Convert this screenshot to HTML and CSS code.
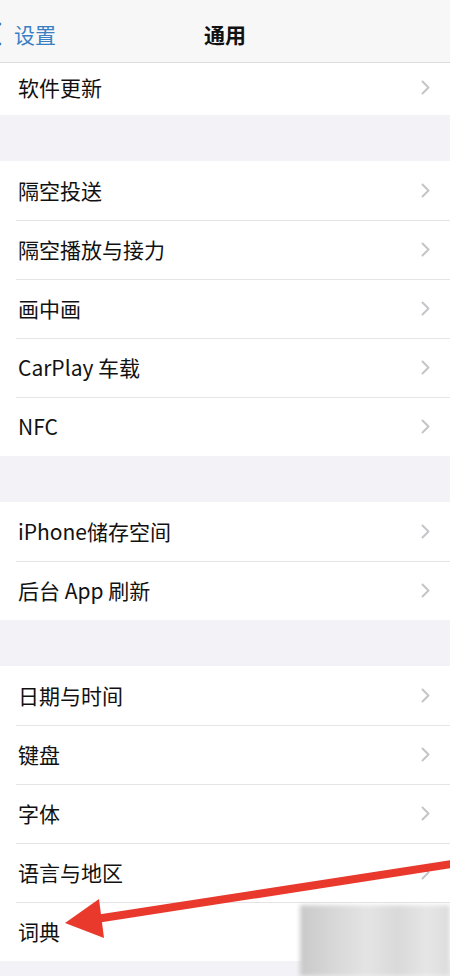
FILE: index.html
```html
<!DOCTYPE html>
<html lang="zh">
<head>
<meta charset="utf-8">
<title>通用</title>
<link rel="stylesheet" href="styles.css">
</head>
<body>
<div class="screen">
  <header class="nav">
    <div class="back">
      <svg class="back-icon" width="12" height="24" viewBox="0 0 12 24"><polyline points="9,2 -1,12 9,22" fill="none" stroke="#3a7fc4" stroke-width="2.6" stroke-linecap="round" stroke-linejoin="round"/></svg>
      <span class="back-text">设置</span>
    </div>
    <div class="title">通用</div>
  </header>

  <section class="group first">
    <div class="row"><span class="label">软件更新</span><svg class="chev" width="9" height="15" viewBox="0 0 9 15"><polyline points="1.5,1.5 7.5,7.5 1.5,13.5" fill="none" stroke="#c5c5c9" stroke-width="2" stroke-linecap="round" stroke-linejoin="round"/></svg></div>
  </section>

  <section class="group">
    <div class="row"><span class="label">隔空投送</span><svg class="chev" width="9" height="15" viewBox="0 0 9 15"><polyline points="1.5,1.5 7.5,7.5 1.5,13.5" fill="none" stroke="#c5c5c9" stroke-width="2" stroke-linecap="round" stroke-linejoin="round"/></svg></div>
    <div class="row"><span class="label">隔空播放与接力</span><svg class="chev" width="9" height="15" viewBox="0 0 9 15"><polyline points="1.5,1.5 7.5,7.5 1.5,13.5" fill="none" stroke="#c5c5c9" stroke-width="2" stroke-linecap="round" stroke-linejoin="round"/></svg></div>
    <div class="row"><span class="label">画中画</span><svg class="chev" width="9" height="15" viewBox="0 0 9 15"><polyline points="1.5,1.5 7.5,7.5 1.5,13.5" fill="none" stroke="#c5c5c9" stroke-width="2" stroke-linecap="round" stroke-linejoin="round"/></svg></div>
    <div class="row"><span class="label">CarPlay 车载</span><svg class="chev" width="9" height="15" viewBox="0 0 9 15"><polyline points="1.5,1.5 7.5,7.5 1.5,13.5" fill="none" stroke="#c5c5c9" stroke-width="2" stroke-linecap="round" stroke-linejoin="round"/></svg></div>
    <div class="row"><span class="label">NFC</span><svg class="chev" width="9" height="15" viewBox="0 0 9 15"><polyline points="1.5,1.5 7.5,7.5 1.5,13.5" fill="none" stroke="#c5c5c9" stroke-width="2" stroke-linecap="round" stroke-linejoin="round"/></svg></div>
  </section>

  <section class="group">
    <div class="row"><span class="label">iPhone储存空间</span><svg class="chev" width="9" height="15" viewBox="0 0 9 15"><polyline points="1.5,1.5 7.5,7.5 1.5,13.5" fill="none" stroke="#c5c5c9" stroke-width="2" stroke-linecap="round" stroke-linejoin="round"/></svg></div>
    <div class="row"><span class="label">后台 App 刷新</span><svg class="chev" width="9" height="15" viewBox="0 0 9 15"><polyline points="1.5,1.5 7.5,7.5 1.5,13.5" fill="none" stroke="#c5c5c9" stroke-width="2" stroke-linecap="round" stroke-linejoin="round"/></svg></div>
  </section>

  <section class="group">
    <div class="row"><span class="label">日期与时间</span><svg class="chev" width="9" height="15" viewBox="0 0 9 15"><polyline points="1.5,1.5 7.5,7.5 1.5,13.5" fill="none" stroke="#c5c5c9" stroke-width="2" stroke-linecap="round" stroke-linejoin="round"/></svg></div>
    <div class="row"><span class="label">键盘</span><svg class="chev" width="9" height="15" viewBox="0 0 9 15"><polyline points="1.5,1.5 7.5,7.5 1.5,13.5" fill="none" stroke="#c5c5c9" stroke-width="2" stroke-linecap="round" stroke-linejoin="round"/></svg></div>
    <div class="row"><span class="label">字体</span><svg class="chev" width="9" height="15" viewBox="0 0 9 15"><polyline points="1.5,1.5 7.5,7.5 1.5,13.5" fill="none" stroke="#c5c5c9" stroke-width="2" stroke-linecap="round" stroke-linejoin="round"/></svg></div>
    <div class="row"><span class="label">语言与地区</span><svg class="chev" width="9" height="15" viewBox="0 0 9 15"><polyline points="1.5,1.5 7.5,7.5 1.5,13.5" fill="none" stroke="#c5c5c9" stroke-width="2" stroke-linecap="round" stroke-linejoin="round"/></svg></div>
    <div class="row"><span class="label">词典</span></div>
  </section>

  <div class="watermark"></div>
  <svg class="arrow" width="450" height="976" viewBox="0 0 450 976">
    <line x1="452" y1="864" x2="96" y2="919" stroke="#e8392c" stroke-width="8" stroke-linecap="round"/>
    <polygon points="65,923 99,899 104,938" fill="#e8392c"/>
  </svg>
</div>
</body>
</html>
```

FILE: styles.css
```css
* { box-sizing: border-box; }
html, body { margin: 0; padding: 0; }
body {
  background: #f2f2f7;
  font-family: "Noto Sans CJK SC", "Noto Sans", sans-serif;
  color: #111;
}
.screen {
  position: relative;
  width: 450px;
  height: 976px;
  overflow: hidden;
  background: #f2f2f7;
}
.nav {
  position: relative;
  height: 63px;
  background: #f7f7f8;
  border-bottom: 1px solid #dcdcdf;
  display: flex;
  align-items: center;
  justify-content: center;
}
.back {
  position: absolute;
  left: 0;
  top: 0;
  height: 62px;
  display: flex;
  align-items: center;
  padding-top: 6px;
}
.back-icon { margin-left: -9px; margin-right: 11px; }
.back-text {
  font-size: 21px;
  color: #3a7fc4;
}
.title {
  font-size: 21px;
  font-weight: 700;
  color: #111;
  padding-top: 6px;
}
.group {
  background: #fff;
  margin-top: 46px;
}
.group.first { margin-top: 0; }
.row {
  height: 59px;
  display: flex;
  align-items: center;
  justify-content: space-between;
  padding: 0 20px 0 18px;
  position: relative;
}
.group.first .row { height: 52px; padding-bottom: 4px; }
.row + .row::before {
  content: "";
  position: absolute;
  left: 16px;
  right: 0;
  top: 0;
  height: 1px;
  background: #e4e4e7;
}
.label {
  font-size: 21px;
  line-height: 1;
  color: #111;
}
.chev { flex: none; }
.watermark {
  position: absolute;
  left: 300px;
  top: 905px;
  width: 150px;
  height: 71px;
  background:
    linear-gradient(90deg, #c9c9c9 0%, #d6d6d6 20%, #e4e4e4 45%, #d9d9d9 65%, #e6e6e6 85%, #dcdcdc 100%);
  filter: blur(2px);
}
.arrow {
  position: absolute;
  left: 0;
  top: 0;
  pointer-events: none;
}
```
